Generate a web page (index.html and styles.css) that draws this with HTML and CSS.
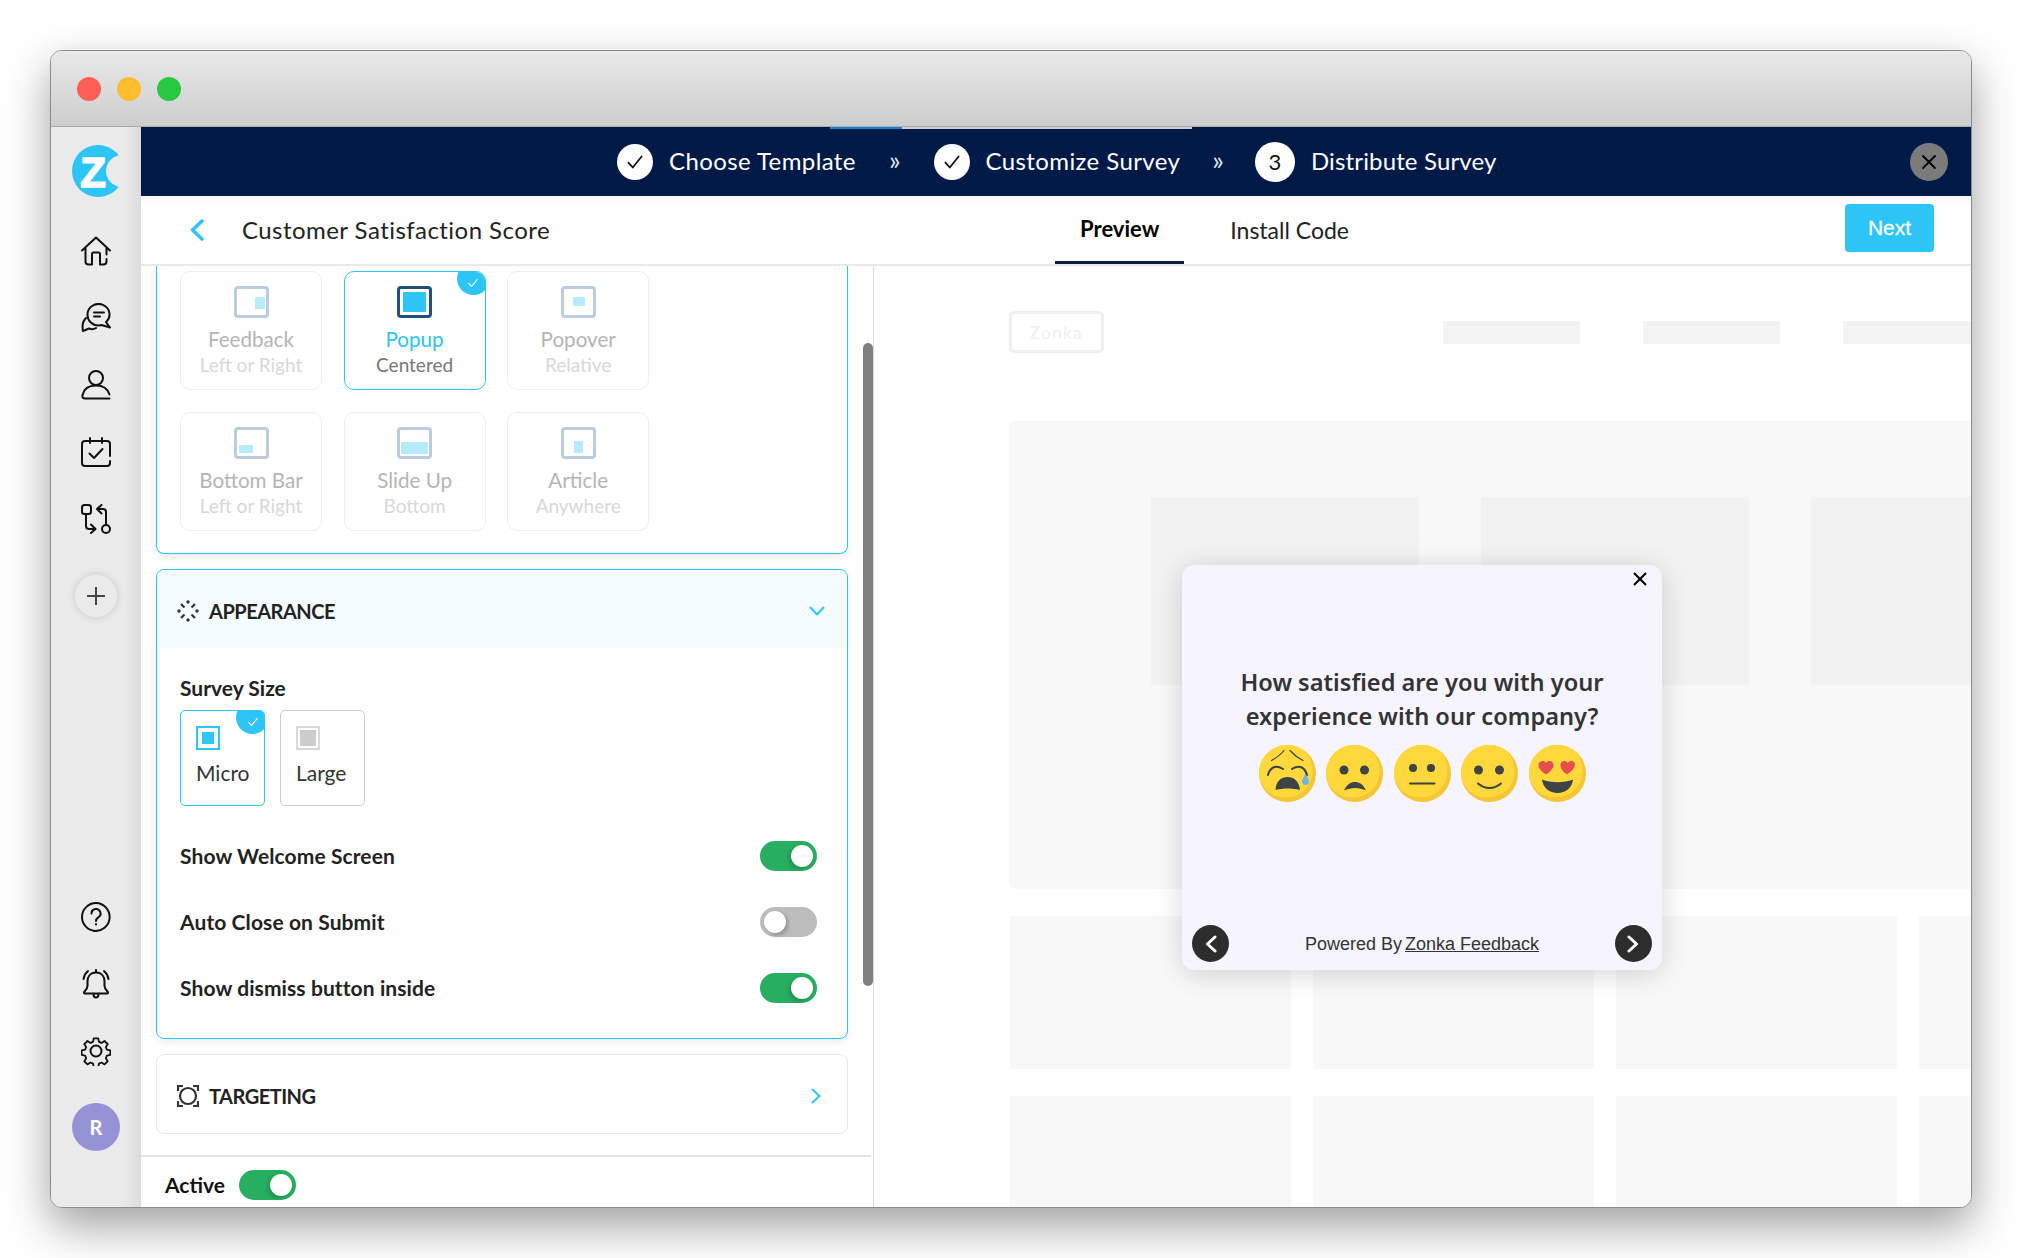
FILE: index.html
```html
<!DOCTYPE html>
<html lang="en">
<head>
  <meta charset="UTF-8">
  <meta name="viewport" content="width=device-width, initial-scale=1.0">
  <title>Customer Satisfaction Score</title>
  <link rel="stylesheet" href="styles.css">
</head>
<body>
  <svg class="defs" width="0" height="0" aria-hidden="true">
    <symbol id="face" viewBox="0 0 57 57">
      <circle cx="28.5" cy="28.5" r="28.5" fill="#f4c534"/>
      <path d="M28 0C44 0 53.500 11 53.500 25.500C53.500 41 42 52.500 26 52.500C11 52.500 0 41 0 27C1 11 13 0 28 0Z" fill="#ffd93b"/>
    </symbol>
    <symbol id="tick" viewBox="0 0 20 20">
      <path d="M4 10.500l4 4.500 8-10" fill="none" stroke="currentColor" stroke-width="1.600" stroke-linecap="round" stroke-linejoin="round"/>
    </symbol>
  </svg>

  <div class="window">
    <div class="titlebar">
      <span class="light light-red"></span>
      <span class="light light-yellow"></span>
      <span class="light light-green"></span>
    </div>

    <div class="app">
      <!-- Sidebar -->
      <aside class="sidebar">
        <svg class="logo" width="50" height="52" viewBox="0 0 50 52">
          <circle cx="26" cy="26" r="26" fill="#2cc5f5"/>
          <circle cx="50" cy="26" r="16" fill="#ebebeb"/>
          <text x="21" y="42" text-anchor="middle" class="logo-z">Z</text>
        </svg>
        <nav class="side-nav">
          <svg class="side-icon" viewBox="0 0 30 30"><path d="M1 14.500 15 1.500l14 13M4.500 12v13.500a3 3 0 0 0 3 3H11V18a1.500 1.500 0 0 1 1.500-1.500h5A1.500 1.500 0 0 1 19 18v10.500h3.500a3 3 0 0 0 3-3V23M25.500 18.500V12"/></svg>
          <svg class="side-icon" viewBox="0 0 30 30"><path d="M6.500 11.500a11 10.500 0 1 1 18.500 7.700l4 5.300-8.500-2.500c-1 .3-2 .4-3 .4a11 10.500 0 0 1-11-10.900z"/><path d="M5 15c-3 3-4 8-3 13l6-2.500c2 .8 5 .8 7-.5M13 9.500h10M13 13.500h6"/></svg>
          <svg class="side-icon" viewBox="0 0 30 30"><circle cx="15" cy="8" r="7"/><path d="M28.500 24.500C26.500 18 21 15.500 15 15.500S3 18 1.500 25c-.5 2.500.5 3.500 2.500 3.500h24.500"/></svg>
          <svg class="side-icon" viewBox="0 0 30 30"><path d="M9 1v5M21 1v5M29 19V7a3 3 0 0 0-3-3H4a3 3 0 0 0-3 3v19a3 3 0 0 0 3 3h22a3 3 0 0 0 3-3v-2M8.500 16.500l4.500 4.500 8.500-9"/></svg>
          <svg class="side-icon" viewBox="0 0 30 30"><rect x="1" y="1" width="9" height="9" rx="2.500"/><circle cx="25" cy="25" r="4"/><path d="M5 10v12a3 3 0 0 0 3 3h6M10 20.500l4.500 4.500-4.500 4M25 21V8a3 3 0 0 0-3-3h-6M20.500 1 16 5l4.500 4.500"/></svg>
        </nav>
        <button class="add-btn" type="button"><svg width="18" height="18" viewBox="0 0 18 18"><path d="M9 0v18M0 9h18"/></svg></button>
        <div class="side-bottom">
          <svg class="side-icon" viewBox="0 0 30 30"><path d="M15 1a14 14 0 1 1-2 27.900"/><path d="M15 29A14 14 0 0 1 15 1"/><path d="M10.500 11.500a4.500 4.500 0 1 1 6.800 3.800c-1.500 1-2.300 1.900-2.300 3.700M15 22v.5"/></svg>
          <svg class="side-icon" viewBox="0 0 30 30"><path d="M15 3.500c-5.500 0-8.500 4-8.500 9v4.500c0 2.500-1.500 4-3 5.500-1 1-.5 2 .5 2h22c1 0 1.500-1 .5-2-1.500-1.500-3-3-3-5.500v-4.500c0-5-3-9-8.500-9zM15 3.500V1M12.500 25c0 2 1 3.500 2.500 3.500s2.500-1.500 2.500-3.500M7 2C4.500 4 3 7 2.500 10M23 2c2.500 2 4 5 4.500 8"/></svg>
          <svg class="side-icon" viewBox="0 0 30 30"><circle cx="15" cy="15" r="5.500"/><path d="M12.500 1h5l.8 3.800 2.900 1.200 3.300-2.100 3.500 3.500-2.100 3.300 1.200 2.900 3.800.8v5l-3.800.8-1.200 2.900 2.100 3.300-3.500 3.500-3.300-2.100-2.900 1.200-.8 3.800h-5l-.8-3.800-2.900-1.200-3.300 2.100-3.500-3.500 2.100-3.300-1.200-2.900-3.800-.8v-5l3.800-.8 1.200-2.900-2.100-3.300 3.500-3.500 3.300 2.100 2.900-1.200z" transform="translate(1.500 1.500) scale(.9)"/></svg>
          <div class="avatar">R</div>
        </div>
      </aside>

      <div class="content">
        <!-- Steps bar -->
        <header class="steps">
          <span class="step-progress"></span>
          <span class="step-circle"><svg width="22" height="22"><use href="#tick"/></svg></span>
          <span class="step-label">Choose Template</span>
          <span class="step-arrow step-arrow-1">»</span>
          <span class="step-circle"><svg width="22" height="22"><use href="#tick"/></svg></span>
          <span class="step-label">Customize Survey</span>
          <span class="step-arrow step-arrow-2">»</span>
          <span class="step-circle step-circle-num">3</span>
          <span class="step-label step-label-last">Distribute Survey</span>
          <button class="close-btn" type="button"><svg width="16" height="16" viewBox="0 0 16 16"><path d="M1.500 1.500l13 13M14.500 1.500l-13 13"/></svg></button>
        </header>

        <!-- Sub header -->
        <div class="subbar">
          <svg class="back" width="16" height="22" viewBox="0 0 16 22"><path d="M13 2 3.500 11l9.500 9"/></svg>
          <h1 class="page-title">Customer Satisfaction Score</h1>
          <div class="tabs">
            <span class="tab tab-active">Preview</span>
            <span class="tab">Install Code</span>
          </div>
          <button class="next-btn" type="button">Next</button>
        </div>

        <div class="workspace">
          <!-- Settings column -->
          <section class="settings">
            <div class="settings-scroll">
              <div class="panels">
                <div class="panel panel-open panel-cut">
                  <div class="type-grid">
                    <div class="type-card">
                      <span class="type-icon"><i class="fill fill-right"></i></span>
                      <span class="type-name">Feedback</span>
                      <span class="type-sub">Left or Right</span>
                    </div>
                    <div class="type-card type-card-on">
                      <span class="badge"><svg width="14" height="14"><use href="#tick"/></svg></span>
                      <span class="type-icon"><i class="fill fill-all"></i></span>
                      <span class="type-name">Popup</span>
                      <span class="type-sub">Centered</span>
                    </div>
                    <div class="type-card">
                      <span class="type-icon"><i class="fill fill-mid"></i></span>
                      <span class="type-name">Popover</span>
                      <span class="type-sub">Relative</span>
                    </div>
                    <div class="type-card">
                      <span class="type-icon"><i class="fill fill-bar"></i></span>
                      <span class="type-name">Bottom Bar</span>
                      <span class="type-sub">Left or Right</span>
                    </div>
                    <div class="type-card">
                      <span class="type-icon"><i class="fill fill-slide"></i></span>
                      <span class="type-name">Slide Up</span>
                      <span class="type-sub">Bottom</span>
                    </div>
                    <div class="type-card">
                      <span class="type-icon"><i class="fill fill-article"></i></span>
                      <span class="type-name">Article</span>
                      <span class="type-sub">Anywhere</span>
                    </div>
                  </div>
                </div>

                <div class="panel panel-open">
                  <div class="panel-head panel-head-on">
                    <svg class="panel-icon panel-icon-dots" viewBox="0 0 22 22">
                      <circle cx="11" cy="2" r="1.700"/><circle cx="2" cy="11" r="1.700"/><circle cx="20" cy="11" r="1.700"/><circle cx="11" cy="20" r="1.700"/>
                      <path d="M4 4l3.500 3.500M18 4l-3.500 3.500M4 18l3.500-3.500M18 18l-3.500-3.500"/>
                    </svg>
                    <span class="panel-title">APPEARANCE</span>
                    <svg class="chev" width="16" height="10" viewBox="0 0 16 10"><path d="M1.500 1.500 8 8.500l6.500-7"/></svg>
                  </div>
                  <div class="panel-body">
                    <div class="field-label">Survey Size</div>
                    <div class="size-row">
                      <div class="size-card size-card-on">
                        <span class="badge"><svg width="14" height="14"><use href="#tick"/></svg></span>
                        <span class="size-icon"></span>
                        <span class="size-name">Micro</span>
                      </div>
                      <div class="size-card">
                        <span class="size-icon size-icon-large"></span>
                        <span class="size-name">Large</span>
                      </div>
                    </div>
                    <div class="switch-row">
                      <span class="switch-text">Show Welcome Screen</span>
                      <span class="toggle toggle-on"></span>
                    </div>
                    <div class="switch-row">
                      <span class="switch-text">Auto Close on Submit</span>
                      <span class="toggle"></span>
                    </div>
                    <div class="switch-row">
                      <span class="switch-text">Show dismiss button inside</span>
                      <span class="toggle toggle-on"></span>
                    </div>
                  </div>
                </div>

                <div class="panel">
                  <div class="panel-head panel-head-closed">
                    <svg class="panel-icon" viewBox="0 0 22 22"><circle cx="11" cy="11" r="8"/><path d="M1 6V1h5M16 1h5v5M21 16v5h-5M6 21H1v-5"/></svg>
                    <span class="panel-title">TARGETING</span>
                    <svg class="chev" width="10" height="16" viewBox="0 0 10 16"><path d="M1.500 1.500 8.500 8l-7 6.500"/></svg>
                  </div>
                </div>
              </div>
              <div class="scrollbar"><span class="scrollbar-thumb"></span></div>
            </div>

            <div class="active-bar">
              <span class="switch-text">Active</span>
              <span class="toggle toggle-on"></span>
            </div>
          </section>

          <!-- Preview column -->
          <section class="preview">
            <div class="fake-nav">
              <span class="fake-logo">Zonka</span>
              <span class="fake-link"></span>
              <span class="fake-link"></span>
              <span class="fake-link"></span>
            </div>
            <div class="fake-hero">
              <span class="fake-tile"></span>
              <span class="fake-tile"></span>
              <span class="fake-tile"></span>
            </div>
            <div class="fake-row">
              <span></span><span></span><span></span><span></span>
            </div>
            <div class="fake-row">
              <span></span><span></span><span></span><span></span>
            </div>

            <div class="popup">
              <svg class="popup-x" width="14" height="14" viewBox="0 0 14 14"><path d="M1 1l12 12M13 1 1 13"/></svg>
              <h2 class="popup-title">How satisfied are you with your experience with our company?</h2>
              <div class="faces">
                <svg width="57" height="57" viewBox="0 0 57 57">
                  <use href="#face"/>
                  <path d="M12.500 15.500C17 13 21.500 10 25 5.500M44 15.500C39 13 35 10 31 5.500" class="face-thin"/>
                  <path d="M9 30C11 23 16 19 24 24M48 30C46 23 41 19 33 24" class="face-line"/>
                  <path d="M16.500 45C17 36 22 32 28.500 32S40 36 41 45C33 43 24 43 16.500 45Z" fill="#3e4347"/>
                  <path d="M46.500 29c-2 3.500-3.500 5.500-3.500 7.500a3.500 3.500 0 0 0 7 0c0-2-1.500-4-3.500-7.500z" fill="#6fb3e8"/>
                </svg>
                <svg width="57" height="57" viewBox="0 0 57 57">
                  <use href="#face"/>
                  <circle cx="18" cy="25" r="4.500" fill="#3e4347"/>
                  <circle cx="38.500" cy="25" r="4.500" fill="#3e4347"/>
                  <path d="M18 45.500C21 39 25 37 29 37S37 39 40 45.500C34 42 24 42 18 45.500Z" fill="#3e4347"/>
                </svg>
                <svg width="57" height="57" viewBox="0 0 57 57">
                  <use href="#face"/>
                  <circle cx="19" cy="23" r="4" fill="#3e4347"/>
                  <circle cx="37" cy="23" r="4" fill="#3e4347"/>
                  <path d="M16 38.500h24.500" class="face-line" stroke-width="3"/>
                </svg>
                <svg width="57" height="57" viewBox="0 0 57 57">
                  <use href="#face"/>
                  <circle cx="17.500" cy="25" r="4.500" fill="#3e4347"/>
                  <circle cx="38.500" cy="25" r="4.500" fill="#3e4347"/>
                  <path d="M17 38.500C24 44.500 33 44.500 40 38.500" class="face-line" stroke-width="2.500"/>
                </svg>
                <svg width="57" height="57" viewBox="0 0 57 57">
                  <use href="#face"/>
                  <path d="M17 29.500C12 26 9 23 9.500 19.500 10 16 15 14.500 17 18 19 14.500 24 16 24.500 19.500 25 23 22 26 17 29.500Z" fill="#e84d4d"/>
                  <path d="M38 29.500C33 26 31 23 31.500 19.500 32 16 36.500 14.500 38.500 18 41 14.500 46 16 46 19.500 46 23 43 26 38 29.500Z" fill="#e84d4d"/>
                  <path d="M13 34.500C22 38 35 38 44 34.500C43 43 36.500 48 28.500 48S14 43 13 34.500Z" fill="#3e4347"/>
                </svg>
              </div>
              <div class="popup-foot">
                <span class="round-btn"><svg width="14" height="18" viewBox="0 0 14 18"><path d="M11 2 3.500 9l7.500 7"/></svg></span>
                <span class="powered">Powered By <a href="#">Zonka Feedback</a></span>
                <span class="round-btn"><svg width="14" height="18" viewBox="0 0 14 18"><path d="M3 2l7.500 7L3 16"/></svg></span>
              </div>
            </div>
          </section>
        </div>
      </div>
    </div>
  </div>
</body>
</html>
```

FILE: styles.css
```css
* {
  box-sizing: border-box;
  margin: 0;
  padding: 0;
}

html,
body {
  height: 100%;
  overflow: hidden;
}

body {
  background: #fff;
  padding: 50px 0 0 50px;
  font-family: 'Lato', sans-serif;
  color: #222;
}

button {
  border: none;
  font-family: inherit;
  cursor: pointer;
}

.defs {
  position: absolute;
}

/* Window */
.window {
  width: 1922px;
  height: 1158px;
  display: flex;
  flex-direction: column;
  border: 1px solid #8c8c8c;
  border-radius: 12px;
  overflow: hidden;
  background: #fff;
  box-shadow: 0 18px 45px rgba(0, 0, 0, 0.38);
}

.titlebar {
  flex: 0 0 76px;
  display: flex;
  align-items: center;
  gap: 16px;
  padding-left: 26px;
  background: linear-gradient(#e9e9e9, #cdcdcd);
  border-bottom: 1px solid #aaa;
}

.light {
  width: 24px;
  height: 24px;
  border-radius: 50%;
}

.light-red { background: #ff5f57; }
.light-yellow { background: #ffbd2e; }
.light-green { background: #28c840; }

.app {
  flex: 1;
  display: flex;
  min-height: 0;
}

/* Sidebar */
.sidebar {
  flex: 0 0 90px;
  display: flex;
  flex-direction: column;
  align-items: center;
  padding: 18px 0 56px;
  background: linear-gradient(90deg, #ebebeb 80%, #dcdcdc);
}

.logo {
  flex-shrink: 0;
  margin: 0 0 39px 2px;
}

.logo-z {
  font-family: 'Liberation Sans', sans-serif;
  font-weight: 700;
  font-size: 42px;
  fill: #fff;
  stroke: #fff;
  stroke-width: 1.5;
}

.side-nav,
.side-bottom {
  display: flex;
  flex-direction: column;
  align-items: center;
  gap: 37px;
}

.side-icon {
  width: 30px;
  height: 30px;
  flex-shrink: 0;
  fill: none;
  stroke: #111;
  stroke-width: 2;
  stroke-linecap: round;
  stroke-linejoin: round;
}

.add-btn {
  width: 42px;
  height: 42px;
  margin-top: 41px;
  flex-shrink: 0;
  display: flex;
  align-items: center;
  justify-content: center;
  border-radius: 50%;
  background: #ebebeb;
  box-shadow: 0 0 10px rgba(0, 0, 0, 0.14);
}

.add-btn path {
  stroke: #444;
  stroke-width: 2;
}

.side-bottom {
  margin-top: auto;
}

.avatar {
  width: 48px;
  height: 48px;
  display: flex;
  align-items: center;
  justify-content: center;
  border-radius: 50%;
  background: #9593d6;
  color: #fff;
  font-size: 20px;
  font-weight: 700;
}

.content {
  flex: 1;
  min-width: 0;
  display: flex;
  flex-direction: column;
}

/* Steps bar */
.steps {
  position: relative;
  flex: 0 0 69px;
  display: flex;
  align-items: center;
  padding: 0 23px 0 476px;
  background: #001a47;
  color: #fff;
}

.step-progress {
  position: absolute;
  top: 0;
  left: 689px;
  width: 362px;
  height: 2px;
  background: linear-gradient(90deg, #1c7fd0 72px, #cfcfcf 72px);
}

.step-circle {
  width: 36px;
  height: 36px;
  display: flex;
  align-items: center;
  justify-content: center;
  border-radius: 50%;
  background: #fff;
  color: #111;
  flex-shrink: 0;
}

.step-circle-num {
  width: 40px;
  height: 40px;
  font-size: 22px;
}

.step-label {
  margin: -2px 0 0 16px;
  font-size: 24px;
  letter-spacing: 0.4px;
  white-space: nowrap;
}

.step-label-last {
  letter-spacing: 0.15px;
}

.step-arrow {
  font-size: 27px;
  line-height: 1;
  margin-top: -4px;
  color: #dfe5ee;
}

.step-arrow-1 { margin-left: 33px; margin-right: 33px; }
.step-arrow-2 { margin-left: 32px; margin-right: 31px; }

.close-btn {
  width: 38px;
  height: 38px;
  margin-left: auto;
  display: flex;
  align-items: center;
  justify-content: center;
  border-radius: 50%;
  background: #7b7b7b;
}

.close-btn path {
  stroke: #000;
  stroke-width: 1.8;
}

/* Sub header */
.subbar {
  position: relative;
  flex: 0 0 68px;
  display: flex;
  align-items: center;
  padding: 0 37px 0 49px;
  border-bottom: 2px solid #e8eaee;
  box-shadow: inset 0 8px 8px -6px rgba(0, 26, 71, 0.06);
}

.back {
  flex-shrink: 0;
  margin-left: -1px;
}

.back path {
  fill: none;
  stroke: #2cc5f5;
  stroke-width: 3.5;
  stroke-linecap: round;
  stroke-linejoin: round;
}

.page-title {
  margin: -2px 0 0 37px;
  font-size: 24px;
  font-weight: 400;
  letter-spacing: 0.45px;
  color: #222;
  white-space: nowrap;
}

.tabs {
  display: flex;
  align-self: stretch;
  margin-left: 505px;
  gap: 21px;
}

.tab {
  display: flex;
  align-items: center;
  padding: 0 25px;
  font-size: 23px;
  color: #222;
  height: 68px;
}

.tab-active {
  font-size: 22px;
  font-weight: 700;
  color: #000;
  border-bottom: 3px solid #13193a;
}

.next-btn {
  width: 89px;
  height: 48px;
  margin: -5px 0 0 auto;
  border-radius: 4px;
  background: #2cc5f5;
  color: #fff;
  font-family: 'Liberation Sans', sans-serif;
  font-size: 21px;
  -webkit-text-stroke: 0.3px #fff;
}

.workspace {
  flex: 1;
  display: flex;
  min-height: 0;
}

/* Settings column */
.settings {
  flex: 0 0 733px;
  display: flex;
  flex-direction: column;
  border-right: 1px solid #dcdcdc;
}

.settings-scroll {
  flex: 1;
  display: flex;
  min-height: 0;
  overflow: hidden;
}

.panels {
  flex: 0 0 722px;
  padding: 0 15px;
  display: flex;
  flex-direction: column;
  gap: 15px;
}

.panel {
  flex-shrink: 0;
  background: #fff;
  border: 1px solid #e6e6e6;
  border-radius: 8px;
}

.panel-open {
  border-color: #2cc5f5;
  box-shadow: 0 3px 8px rgba(0, 0, 0, 0.08);
}

.panel-cut {
  border-top: none;
  border-radius: 0 0 8px 8px;
  padding: 5px 0 22px 23px;
}

.type-grid {
  display: grid;
  grid-template-columns: repeat(3, 142px);
  grid-auto-rows: 119px;
  gap: 22px 21.6px;
}

.type-card {
  position: relative;
  display: flex;
  flex-direction: column;
  align-items: center;
  padding-top: 14px;
  border: 1px solid #eee;
  border-radius: 10px;
  overflow: hidden;
}

.type-card-on {
  border-color: #2cc5f5;
}

.badge {
  position: absolute;
  top: -10px;
  right: -5px;
  width: 33px;
  height: 33px;
  display: flex;
  align-items: center;
  justify-content: center;
  padding: 8px 0 0 0;
  border-radius: 50%;
  background: #2cc5f5;
  color: #fff;
}

.type-icon {
  position: relative;
  width: 35px;
  height: 32px;
  flex-shrink: 0;
  border: 3px solid #bccbdf;
  border-radius: 4px;
}

.fill {
  position: absolute;
  background: #b6ebfb;
  border-radius: 1px;
}

.fill-right { top: 8px; right: 1px; width: 10px; height: 12px; }
.fill-mid { top: 8px; left: 9px; width: 12px; height: 9px; }
.fill-bar { bottom: 3px; left: 2px; width: 14px; height: 8px; }
.fill-slide { bottom: 2px; left: 1px; width: 27px; height: 12px; }
.fill-article { bottom: 3px; left: 10px; width: 9px; height: 12px; }
.fill-all { top: 3px; left: 3px; right: 3px; bottom: 3px; background: #2cc5f5; }

.type-card-on .type-icon {
  border-color: #234f80;
}

.type-name {
  margin-top: 8px;
  font-size: 20.6px;
  line-height: 26px;
  color: #b5b5b5;
}

.type-sub {
  font-size: 19px;
  line-height: 26px;
  color: #d8d8d8;
}

.type-card-on .type-name {
  color: #2cc5f5;
}

.type-card-on .type-sub {
  color: #777;
}

.panel-head {
  height: 78px;
  display: flex;
  align-items: center;
  padding: 4px 22px 0 20px;
  border-radius: 8px 8px 0 0;
}

.panel-head-on {
  background: #f4fdff;
}

.panel-head-closed {
  padding-right: 26px;
}

.panel-icon {
  width: 22px;
  height: 22px;
  flex-shrink: 0;
  fill: none;
  stroke: #333;
  stroke-width: 2.2;
}

.panel-icon-dots circle {
  fill: #333;
  stroke: none;
}

.panel-title {
  margin-left: 10px;
  font-size: 20px;
  font-weight: 700;
  letter-spacing: -0.5px;
  color: #222;
}

.chev {
  margin-left: auto;
}

.chev path {
  fill: none;
  stroke: #2cc5f5;
  stroke-width: 2;
  stroke-linecap: round;
  stroke-linejoin: round;
}

.panel-body {
  padding: 28px 30px 0 23px;
  height: 390px;
}

.field-label,
.switch-row {
  font-size: 21px;
  font-weight: 700;
  color: #222;
}

.field-label {
  line-height: 24px;
}

.size-row {
  display: flex;
  gap: 15px;
  margin: 10px 0 35px;
}

.size-card {
  position: relative;
  width: 85px;
  height: 96px;
  display: flex;
  flex-direction: column;
  padding: 15px 0 0 15px;
  border: 1px solid #ccc;
  border-radius: 5px;
  overflow: hidden;
}

.size-card-on {
  border-color: #2cc5f5;
}

.size-icon {
  width: 24px;
  height: 24px;
  border: 2px solid #2cc5f5;
  background: #2cc5f5;
  box-shadow: inset 0 0 0 4px #fff;
}

.size-icon-large {
  border-color: #d8d8d8;
  background: #ccc;
  box-shadow: inset 0 0 0 2px #fff;
}

.size-name {
  margin-top: 10px;
  font-size: 21px;
  color: #333;
}

.switch-row {
  height: 30px;
  margin-bottom: 36px;
  display: flex;
  align-items: center;
  justify-content: space-between;
  letter-spacing: 0.1px;
}

.switch-text {
  margin-top: -2px;
}

.toggle {
  position: relative;
  width: 57px;
  height: 30px;
  flex-shrink: 0;
  border-radius: 15px;
  background: #bdbdbd;
}

.toggle::after {
  content: '';
  position: absolute;
  top: 4px;
  left: 4px;
  width: 22px;
  height: 22px;
  border-radius: 50%;
  background: #fff;
  box-shadow: 2px 2px 4px rgba(0, 0, 0, 0.25);
}

.toggle-on {
  background: #27ae60;
}

.toggle-on::after {
  left: 31px;
  box-shadow: -2px 2px 4px rgba(0, 0, 0, 0.2);
}

.scrollbar {
  flex: 0 0 10px;
  padding-top: 77px;
}

.scrollbar-thumb {
  display: block;
  height: 643px;
  border-radius: 5px;
  background: #808080;
}

.active-bar {
  flex: 0 0 52px;
  display: flex;
  align-items: center;
  gap: 14px;
  margin-right: 2px;
  padding: 6px 0 0 24px;
  border-top: 2px solid #e4e4e4;
  font-size: 21px;
  font-weight: 700;
  color: #111;
}

/* Preview column */
.preview {
  position: relative;
  flex: 1;
  min-width: 0;
  overflow: hidden;
  padding: 45px 0 0 135px;
}

.fake-nav {
  display: flex;
  align-items: flex-start;
  gap: 63px;
}

.fake-logo {
  width: 95px;
  height: 42px;
  flex-shrink: 0;
  margin-right: 276px;
  display: flex;
  align-items: center;
  justify-content: center;
  border: 3px solid #f0f0f0;
  border-radius: 5px;
  color: #f0f0f0;
  font-size: 17px;
  letter-spacing: 1.5px;
}

.fake-link {
  width: 137px;
  height: 23px;
  flex-shrink: 0;
  margin-top: 10px;
  background: #f3f3f3;
}

.fake-hero {
  width: 1100px;
  height: 468px;
  margin-top: 68px;
  display: flex;
  gap: 62px;
  padding: 76px 0 0 142px;
  border-radius: 6px;
  background: #f8f8f8;
}

.fake-tile {
  width: 268px;
  height: 188px;
  flex-shrink: 0;
  background: #f2f2f2;
}

.fake-row {
  display: flex;
  gap: 22px;
  margin: 27px 0 0 1px;
}

.fake-row span {
  width: 281px;
  height: 153px;
  flex-shrink: 0;
  background: #f8f8f8;
}

.popup {
  position: absolute;
  top: 299px;
  left: 308px;
  width: 480px;
  height: 405px;
  display: flex;
  flex-direction: column;
  align-items: center;
  padding: 100px 0 8px;
  border-radius: 12px;
  background: #f6f5ff;
  box-shadow: 0 4px 28px rgba(0, 0, 0, 0.16);
}

.popup-x {
  position: absolute;
  top: 7px;
  right: 15px;
}

.popup-x path {
  stroke: #000;
  stroke-width: 2;
}

.popup-title {
  width: 400px;
  font-family: 'Noto Sans', sans-serif;
  font-size: 23.6px;
  font-weight: 600;
  line-height: 34px;
  text-align: center;
  color: #333;
}

.faces {
  display: flex;
  gap: 10.5px;
  margin-top: 12px;
}

.face-thin,
.face-line {
  fill: none;
  stroke: #3e4347;
  stroke-width: 2;
  stroke-linecap: round;
}

.face-thin {
  stroke-width: 1.2;
}

.popup-foot {
  width: 100%;
  margin-top: auto;
  display: flex;
  align-items: center;
  justify-content: space-between;
  padding: 0 10px;
}

.round-btn {
  width: 37px;
  height: 37px;
  display: flex;
  align-items: center;
  justify-content: center;
  border-radius: 50%;
  background: #2d2d2d;
}

.round-btn path {
  fill: none;
  stroke: #fff;
  stroke-width: 3;
  stroke-linecap: round;
  stroke-linejoin: round;
}

.powered {
  margin-top: 2px;
  font-family: 'Liberation Sans', sans-serif;
  font-size: 18px;
  color: #333;
}

.powered a {
  margin-left: -2px;
  color: #333;
}
```
